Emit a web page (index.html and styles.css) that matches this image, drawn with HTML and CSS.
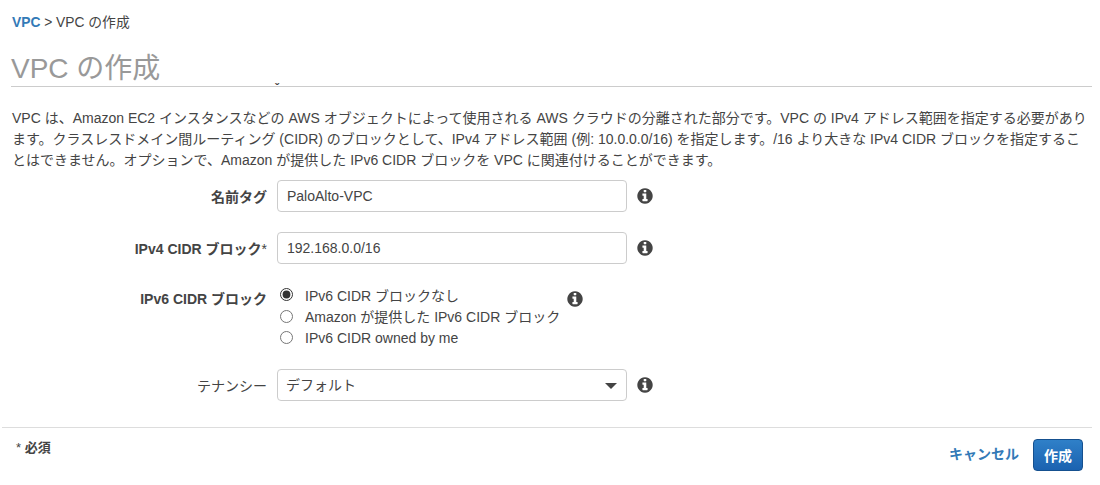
FILE: index.html
```html
<!DOCTYPE html>
<html lang="ja">
<head>
  <meta charset="UTF-8">
  <title>VPC の作成</title>
  <link rel="stylesheet" href="styles.css">
</head>
<body>
  <svg class="sprite" width="0" height="0">
    <symbol id="info" viewBox="0 0 1792 1792">
      <path d="M1152 1376v-160q0-14-9-23t-23-9h-96v-512q0-14-9-23t-23-9h-320q-14 0-23 9t-9 23v160q0 14 9 23t23 9h96v320h-96q-14 0-23 9t-9 23v160q0 14 9 23t23 9h448q14 0 23-9t9-23zm-128-896v-160q0-14-9-23t-23-9h-192q-14 0-23 9t-9 23v160q0 14 9 23t23 9h192q14 0 23-9t9-23zm640 416q0 209-103 385.5t-279.5 279.5-385.5 103-385.5-103-279.5-279.5-103-385.5 103-385.5 279.5-279.5 385.5-103 385.5 103 279.5 279.5 103 385.5z"/>
    </symbol>
  </svg>

  <div class="breadcrumb"><a href="#">VPC</a> &gt; VPC の作成</div>

  <h1 class="page-title">VPC の作成<span class="title-mark">ˇ</span></h1>

  <p class="intro">VPC は、Amazon EC2 インスタンスなどの AWS オブジェクトによって使用される AWS クラウドの分離された部分です。VPC の IPv4 アドレス範囲を指定する必要があり<br>ます。クラスレスドメイン間ルーティング (CIDR) のブロックとして、IPv4 アドレス範囲 (例: 10.0.0.0/16) を指定します。/16 より大きな IPv4 CIDR ブロックを指定するこ<br>とはできません。オプションで、Amazon が提供した IPv6 CIDR ブロックを VPC に関連付けることができます。</p>

  <form class="form">
    <div class="form-row">
      <label class="form-label" for="name-tag">名前タグ</label>
      <input class="text-input" type="text" id="name-tag" value="PaloAlto-VPC">
      <svg class="info-icon"><use href="#info"/></svg>
    </div>

    <div class="form-row">
      <label class="form-label" for="ipv4">IPv4 CIDR ブロック<span class="star">*</span></label>
      <input class="text-input" type="text" id="ipv4" value="192.168.0.0/16">
      <svg class="info-icon"><use href="#info"/></svg>
    </div>

    <div class="form-row form-row-radio">
      <div class="form-label">IPv6 CIDR ブロック</div>
      <div class="radio-group">
        <label class="radio"><input type="radio" name="ipv6" checked>IPv6 CIDR ブロックなし</label>
        <label class="radio"><input type="radio" name="ipv6">Amazon が提供した IPv6 CIDR ブロック</label>
        <label class="radio"><input type="radio" name="ipv6">IPv6 CIDR owned by me</label>
      </div>
      <svg class="info-icon"><use href="#info"/></svg>
    </div>

    <div class="form-row">
      <label class="form-label form-label-plain" for="tenancy">テナンシー</label>
      <div class="select-wrap">
        <select class="select-input" id="tenancy">
          <option>デフォルト</option>
        </select>
      </div>
      <svg class="info-icon"><use href="#info"/></svg>
    </div>
  </form>

  <div class="footer">
    <div class="required"><span class="star">*</span> 必須</div>
    <div class="actions">
      <a class="cancel" href="#">キャンセル</a>
      <button class="btn-primary" type="button">作成</button>
    </div>
  </div>
</body>
</html>
```

FILE: styles.css
```css
body {
  margin: 0;
  height: 485px;
  overflow: hidden;
  background-color: #ffffff;
  color: #444444;
  font-family: "Liberation Sans", "Noto Sans CJK JP", sans-serif;
  font-size: 14px;
}

.sprite {
  position: absolute;
}

.breadcrumb {
  padding: 15px 12px 0;
  font-size: 13.8px;
  line-height: 16px;
}

.breadcrumb a {
  color: #337ab7;
  font-weight: bold;
  text-decoration: none;
}

.page-title {
  position: relative;
  margin: 21px 8px 0 11px;
  padding-bottom: 2px;
  height: 32px;
  border-bottom: 1px solid #cccccc;
  color: #999999;
  font-size: 28px;
  font-weight: normal;
  line-height: 33px;
}

.title-mark {
  position: absolute;
  left: 264px;
  top: 32px;
  color: #444444;
  font-size: 12px;
  font-weight: bold;
  line-height: 10px;
}

.intro {
  margin: 21px 8px 0 12px;
  font-size: 14px;
  line-height: 21px;
  white-space: nowrap;
}

.form {
  margin-top: 9px;
}

.form-row {
  display: flex;
  align-items: center;
  margin-bottom: 20px;
}

.form-row-radio {
  align-items: flex-start;
}

.form-row-radio .form-label {
  padding-top: 5px;
  line-height: 20px;
}

.form-row-radio .info-icon {
  margin-top: 6px;
}

.form-label {
  width: 277px;
  padding-right: 10px;
  box-sizing: border-box;
  text-align: right;
  font-weight: bold;
}

.form-label-plain {
  font-weight: normal;
}

.text-input,
.select-input {
  width: 350px;
  height: 32px;
  box-sizing: border-box;
  padding: 0 9px;
  border: 1px solid #cccccc;
  border-radius: 4px;
  background-color: #ffffff;
  color: #444444;
  font-family: inherit;
  font-size: 14px;
}

.select-wrap {
  position: relative;
  width: 350px;
}

.select-wrap::after {
  content: "";
  position: absolute;
  right: 10px;
  top: 14px;
  border-left: 6px solid transparent;
  border-right: 6px solid transparent;
  border-top: 6px solid #444444;
}

.select-input {
  display: block;
  padding: 0 8px;
  appearance: none;
}

.info-icon {
  width: 18px;
  height: 18px;
  margin-left: 9px;
  fill: #444444;
}

.radio-group {
  display: flex;
  flex-direction: column;
  width: 277px;
  margin-left: 3px;
}

.radio {
  display: flex;
  align-items: center;
  height: 21.5px;
  white-space: nowrap;
}

.radio input {
  width: 13px;
  height: 13px;
  margin: 0 12px 0 0;
  accent-color: #333333;
}

.footer {
  display: flex;
  justify-content: space-between;
  margin: 26px 8px 0 2px;
  padding: 9px 9px 0 14px;
  border-top: 1px solid #dddddd;
}

.required {
  font-size: 13px;
  font-weight: bold;
}

.star {
  font-weight: normal;
}

.actions {
  display: flex;
  align-items: center;
  gap: 14px;
  margin-top: 2px;
}

.cancel {
  padding-bottom: 4px;
  color: #337ab7;
  font-weight: bold;
  text-decoration: none;
}

.btn-primary {
  width: 50px;
  height: 32px;
  padding: 0;
  border: 1px solid #15508f;
  border-radius: 4px;
  background: linear-gradient(#2f80c8, #1b62b0);
  color: #ffffff;
  font-family: inherit;
  font-size: 14px;
  font-weight: bold;
}
```
